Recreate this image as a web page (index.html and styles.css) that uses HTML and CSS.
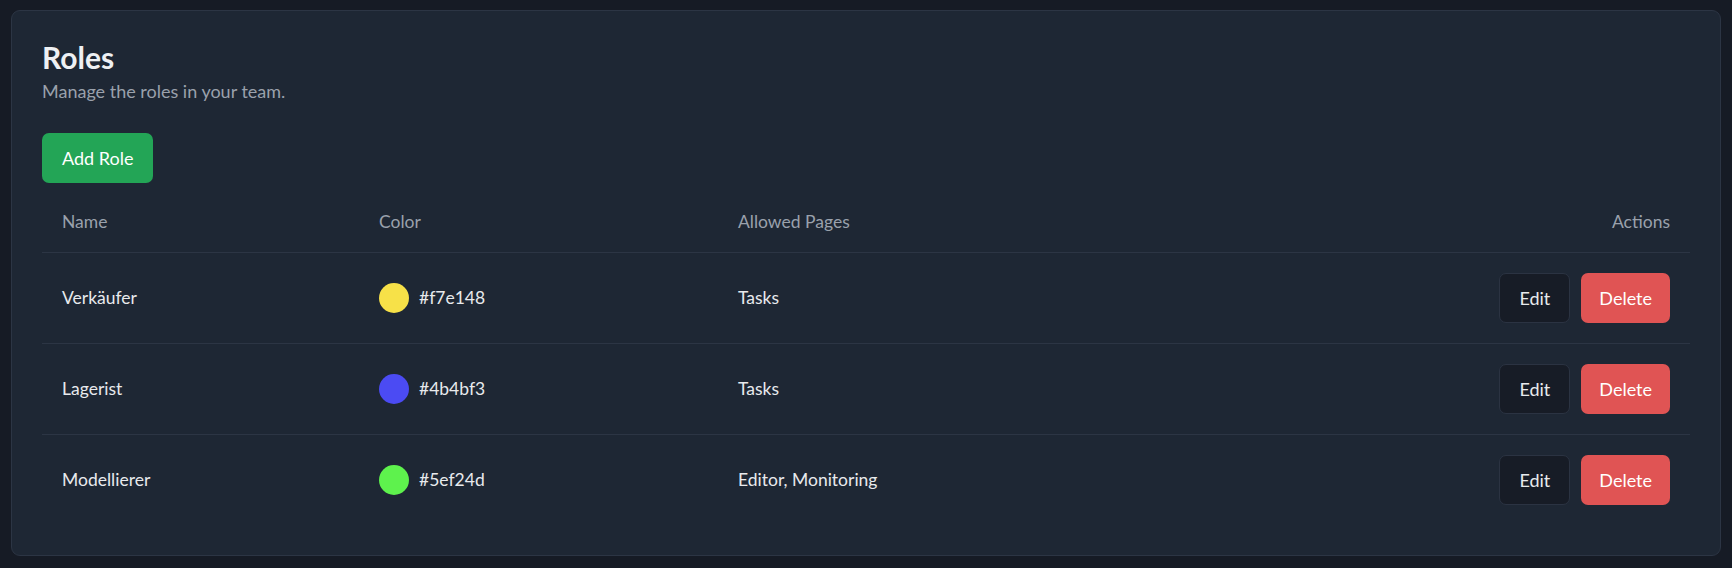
FILE: index.html
```html
<!DOCTYPE html>
<html lang="en">
<head>
<meta charset="utf-8">
<title>Roles</title>
<link rel="stylesheet" href="styles.css">
</head>
<body>
<section class="card">
  <h1 class="title">Roles</h1>
  <p class="subtitle">Manage the roles in your team.</p>
  <button class="btn btn-green">Add Role</button>
  <table class="roles">
    <thead>
      <tr>
        <th class="col-name">Name</th>
        <th class="col-color">Color</th>
        <th class="col-pages">Allowed Pages</th>
        <th class="col-actions">Actions</th>
      </tr>
    </thead>
    <tbody>
      <tr>
        <td>Verkäufer</td>
        <td><span class="swatch-wrap"><span class="swatch" style="background:#f7e148"></span>#f7e148</span></td>
        <td>Tasks</td>
        <td class="actions"><button class="btn btn-dark">Edit</button><button class="btn btn-red">Delete</button></td>
      </tr>
      <tr>
        <td>Lagerist</td>
        <td><span class="swatch-wrap"><span class="swatch" style="background:#4b4bf3"></span>#4b4bf3</span></td>
        <td>Tasks</td>
        <td class="actions"><button class="btn btn-dark">Edit</button><button class="btn btn-red">Delete</button></td>
      </tr>
      <tr>
        <td>Modellierer</td>
        <td><span class="swatch-wrap"><span class="swatch" style="background:#5ef24d"></span>#5ef24d</span></td>
        <td>Editor, Monitoring</td>
        <td class="actions"><button class="btn btn-dark">Edit</button><button class="btn btn-red">Delete</button></td>
      </tr>
    </tbody>
  </table>
</section>
</body>
</html>
```

FILE: styles.css
```css
* { box-sizing: border-box; }

html, body {
  margin: 0;
  background: #161b25;
}

body {
  padding: 10px 11px 11px 11px;
  font-family: "Lato", "Open Sans", sans-serif;
  color: #e5e7eb;
}

.card {
  background: #1e2734;
  border: 1px solid #2c3544;
  border-radius: 9px;
  padding: 27px 30px 30px 30px;
}

.title {
  margin: 0;
  font-size: 30px;
  line-height: 38px;
  font-weight: 700;
  color: #eef0f3;
}

.subtitle {
  margin: 2px 0 0 0;
  font-size: 18px;
  line-height: 26px;
  color: #9aa1ac;
}

.btn {
  font-family: inherit;
  font-size: 18px;
  line-height: 24px;
  border-radius: 7px;
  border: 1px solid transparent;
  cursor: pointer;
}

.btn-green {
  margin-top: 29px;
  height: 50px;
  padding: 0 19px;
  background: #23a556;
  color: #ffffff;
}

.roles {
  margin-top: 12px;
  width: 100%;
  border-collapse: collapse;
  font-size: 17.5px;
}

.roles th {
  text-align: left;
  font-weight: 400;
  color: #9aa1ac;
  padding: 15px 20px 18px 20px;
  line-height: 24px;
  border-bottom: 1px solid #2c3544;
}

.roles td {
  padding: 20px;
  line-height: 24px;
  height: 90px;
  border-bottom: 1px solid #2c3544;
  color: #e8eaed;
  vertical-align: middle;
}

.roles tbody tr:last-child td { border-bottom: none; }

.col-name { width: 317px; }
.col-color { width: 359px; }
.roles th.col-actions { text-align: right; }

.swatch-wrap {
  display: inline-flex;
  align-items: center;
  gap: 10px;
  vertical-align: middle;
}

.swatch {
  width: 30px;
  height: 30px;
  border-radius: 50%;
  display: inline-block;
}

.actions {
  text-align: right;
  white-space: nowrap;
}

.btn-dark {
  height: 50px;
  padding: 0 19px;
  background: #171c26;
  border-color: #2b3342;
  color: #e8eaed;
  vertical-align: middle;
}

.btn-red {
  height: 50px;
  margin-left: 11px;
  padding: 0 17px;
  background: #e05454;
  color: #ffffff;
  vertical-align: middle;
}
```
